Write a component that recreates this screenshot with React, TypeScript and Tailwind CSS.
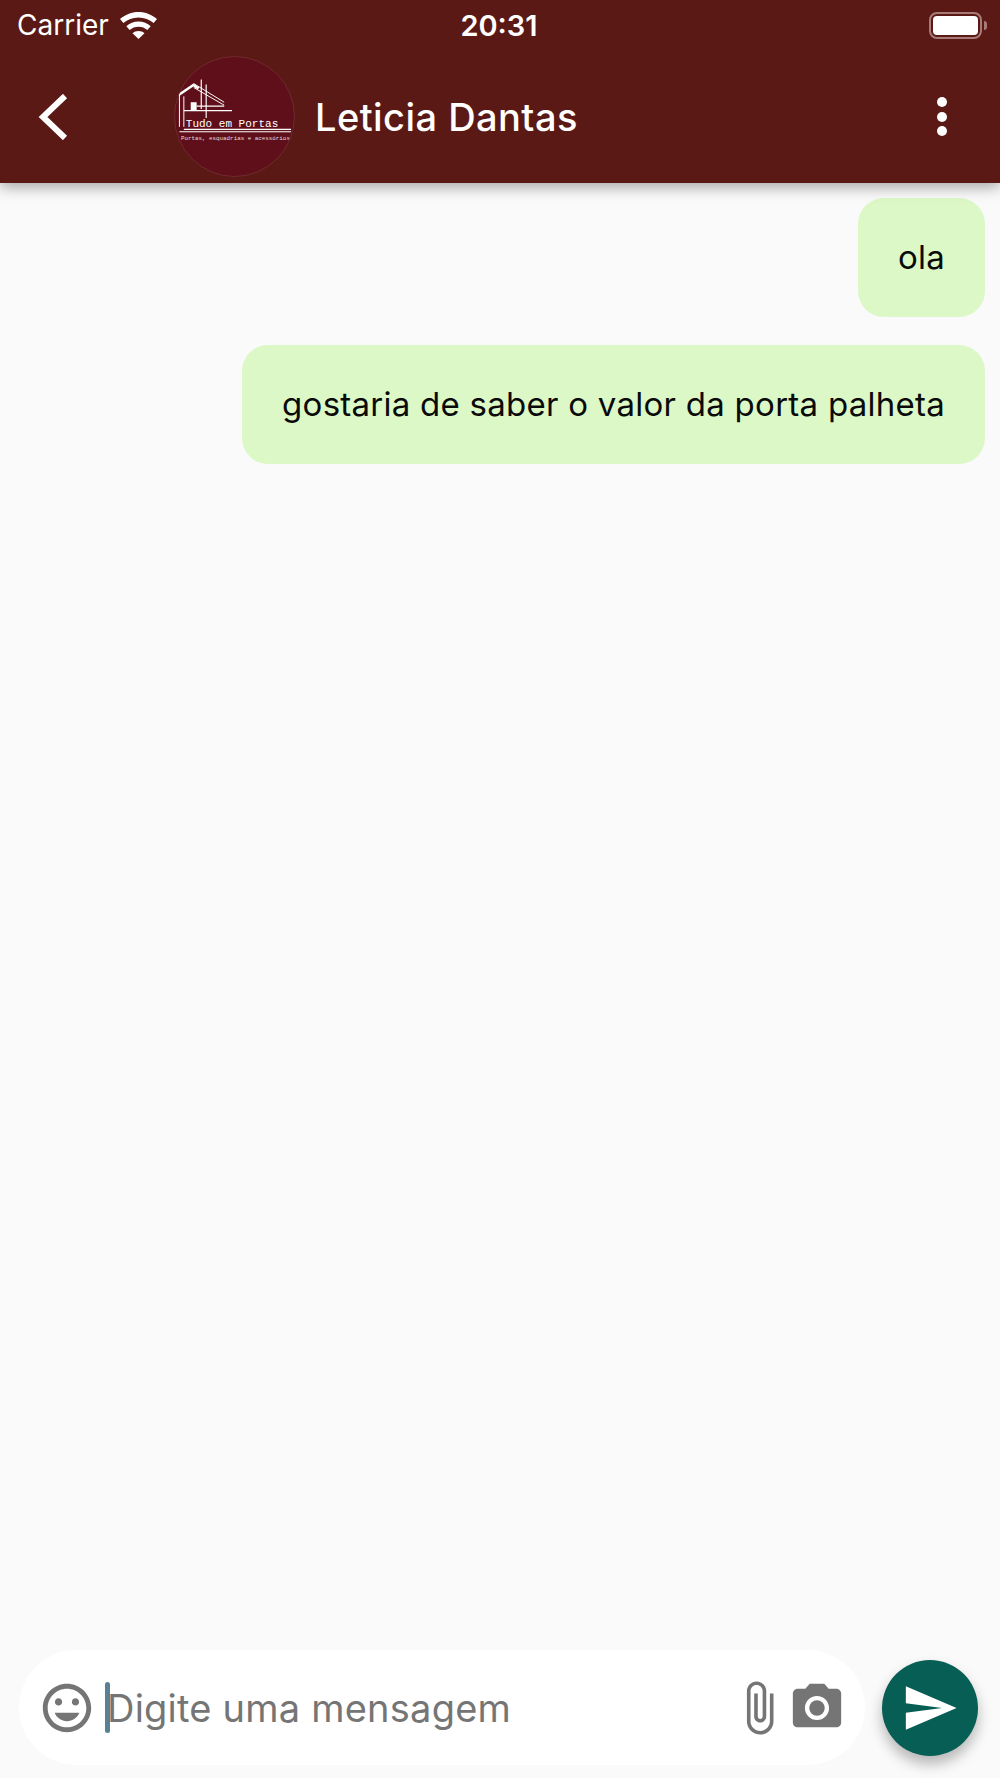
const fontStack = "font-['Inter','Noto_Sans',sans-serif]";

function Wifi() {
  return (
    <svg width="37" height="27" viewBox="0 0 37 27" fill="white">
      <path d="M18.5 0C11.4 0 5 2.7 0 7.1l3.4 3.9C7.4 7.500 12.700 5.400 18.500 5.400s11.100 2.100 15.100 5.600L37 7.100C32 2.700 25.600 0 18.500 0z" />
      <path d="M18.500 9.500c-4.700 0-9 1.800-12.200 4.700l3.400 3.900c2.300-2.100 5.400-3.300 8.800-3.300s6.500 1.200 8.800 3.300l3.400-3.900c-3.200-2.900-7.500-4.700-12.200-4.700z" />
      <path d="M18.500 19c-2.300 0-4.400.9-6 2.300l6 5.700 6-5.700c-1.600-1.400-3.700-2.300-6-2.300z" />
    </svg>
  );
}

function Battery() {
  return (
    <div className="flex items-center gap-[2px]">
      <div className="w-[53px] h-[27px] rounded-[8px] border-2 border-[#a77a77] p-[2px]">
        <div className="w-full h-full rounded-[4px] bg-white" />
      </div>
      <div className="w-[3px] h-[9px] rounded-r-full bg-[#a77a77]" />
    </div>
  );
}

function LogoAvatar() {
  return (
    <div className="w-[121px] h-[121px] rounded-full bg-[#5f0f1a] border border-[#6f2b30] overflow-hidden shrink-0">
      <svg width="119" height="119" viewBox="0 0 121 121" fill="none" stroke="white">
        <path d="M3.300 39L18.700 28.500L24 32" strokeWidth="2.500" />
        <path d="M4.500 38V71" strokeWidth="1" />
        <path d="M9 40V71" strokeWidth="1" />
        <path d="M19 27L50 46M19 31L50 49" strokeWidth="1" />
        <path d="M26.700 23V53M31.700 28V62" strokeWidth="1.200" />
        <path d="M22 50H50M9 54.500H58" strokeWidth="1.200" />
        <rect x="16" y="46" width="6" height="8" fill="white" stroke="none" />
        <path d="M9 73.500H118M4.500 76H118" strokeWidth="1.200" />
        <text x="11" y="71" fontSize="11.200" fill="white" stroke="none" fontFamily="'Liberation Mono'">
          Tudo em Portas
        </text>
        <text x="6" y="84" fontSize="5.970" fill="#e8dcdc" stroke="none" fontFamily="'Liberation Mono'">
          Portas, esquadrias e acessórios
        </text>
      </svg>
    </div>
  );
}

function Header() {
  return (
    <header className="relative z-10 h-[183px] shrink-0 bg-[#5a1914] text-white shadow-[0_4px_14px_rgba(0,0,0,0.35)]">
      <div className="h-[50px] grid grid-cols-3 items-center pl-[17px] pr-[13px]">
        <div className="flex items-center gap-[11px]">
          <span className="text-[28px] leading-none">Carrier</span>
          <Wifi />
        </div>
        <span className="text-center text-[29px] leading-none font-semibold pr-[6px]">20:31</span>
        <div className="flex justify-end">
          <Battery />
        </div>
      </div>
      <div className="flex items-center h-[133px] pl-[38px] pr-[53px]">
        <svg width="30" height="46" viewBox="0 0 30 46" fill="none" stroke="white" strokeWidth="6">
          <path d="M27 2L5 23L27 44" />
        </svg>
        <div className="ml-[106px]">
          <LogoAvatar />
        </div>
        <span className="ml-[20px] text-[38px] leading-none font-medium tracking-[0.45px]">Leticia Dantas</span>
        <div className="ml-auto flex flex-col gap-[4.500px]">
          <div className="w-[10px] h-[10px] rounded-full bg-white" />
          <div className="w-[10px] h-[10px] rounded-full bg-white" />
          <div className="w-[10px] h-[10px] rounded-full bg-white" />
        </div>
      </div>
    </header>
  );
}

function Bubble({ text }: { text: string }) {
  return (
    <div className="h-[119px] flex items-center px-[40px] rounded-[26px] bg-[#dcf8c6] text-[33px] leading-none tracking-[0.26px] text-[#0a0a0a]">
      {text}
    </div>
  );
}

function Composer() {
  return (
    <div className="shrink-0 flex items-center pl-[19px] pr-[22px] pb-[13px]">
      <div className="flex-1 h-[115px] rounded-full bg-white flex items-center pl-[19px] pr-[19px]">
        <svg width="58" height="58" viewBox="0 0 24 24" fill="#757575" className="shrink-0">
          <path d="M11.990 2C6.470 2 2 6.480 2 12s4.470 10 9.990 10C17.520 22 22 17.520 22 12S17.520 2 11.990 2zM12 20c-4.420 0-8-3.580-8-8s3.580-8 8-8 8 3.580 8 8-3.580 8-8 8zm3.500-9c.830 0 1.500-.670 1.500-1.500S16.330 8 15.500 8 14 8.670 14 9.500s.670 1.500 1.500 1.500zm-7 0c.830 0 1.500-.670 1.500-1.500S9.330 8 8.500 8 7 8.670 7 9.500 7.670 11 8.500 11zm3.500 6.500c2.330 0 4.310-1.460 5.110-3.500H6.890c.800 2.040 2.780 3.500 5.110 3.500z" />
        </svg>
        <div className="ml-[9px] w-[5px] h-[51px] rounded-full bg-[#5a8094] shrink-0" />
        <span className="ml-[-3px] text-[38px] leading-none tracking-[0.22px] text-[#757575]">Digite uma mensagem</span>
        <svg width="58" height="58" viewBox="0 0 24 24" fill="#757575" className="ml-auto shrink-0">
          <path d="M16.500 6v11.500c0 2.210-1.790 4-4 4s-4-1.790-4-4V5c0-1.380 1.120-2.500 2.500-2.500s2.500 1.120 2.500 2.500v10.500c0 .550-.450 1-1 1s-1-.450-1-1V6H10v9.500c0 1.380 1.120 2.500 2.500 2.500s2.500-1.120 2.500-2.500V5c0-2.210-1.790-4-4-4S7 2.790 7 5v12.500c0 3.040 2.460 5.500 5.500 5.500s5.500-2.460 5.500-5.500V6h-1.500z" />
        </svg>
        <svg width="58" height="58" viewBox="0 0 24 24" fill="#757575" className="shrink-0">
          <circle cx="12" cy="12" r="3.200" />
          <path d="M9 2L7.170 4H4c-1.100 0-2 .900-2 2v12c0 1.100.900 2 2 2h16c1.100 0 2-.900 2-2V6c0-1.100-.900-2-2-2h-3.170L15 2H9zm3 15c-2.760 0-5-2.240-5-5s2.240-5 5-5 5 2.240 5 5-2.240 5-5 5z" />
        </svg>
      </div>
      <button className="ml-[17px] w-[96px] h-[96px] rounded-full bg-[#075e54] flex items-center justify-center shrink-0 shadow-[0_8px_14px_rgba(0,0,0,0.28)]">
        <svg width="58" height="58" viewBox="0 0 24 24" fill="white">
          <path d="M2.010 21L23 12 2.010 3 2 10l15 2-15 2z" />
        </svg>
      </button>
    </div>
  );
}

export default function App() {
  return (
    <div className={`w-[1000px] h-[1778px] flex flex-col bg-[#fafafa] overflow-hidden ${fontStack}`}>
      <Header />
      <main className="flex-1 flex flex-col items-end gap-[28px] pt-[15px] pr-[15px]">
        <Bubble text="ola" />
        <Bubble text="gostaria de saber o valor da porta palheta" />
      </main>
      <Composer />
    </div>
  );
}
